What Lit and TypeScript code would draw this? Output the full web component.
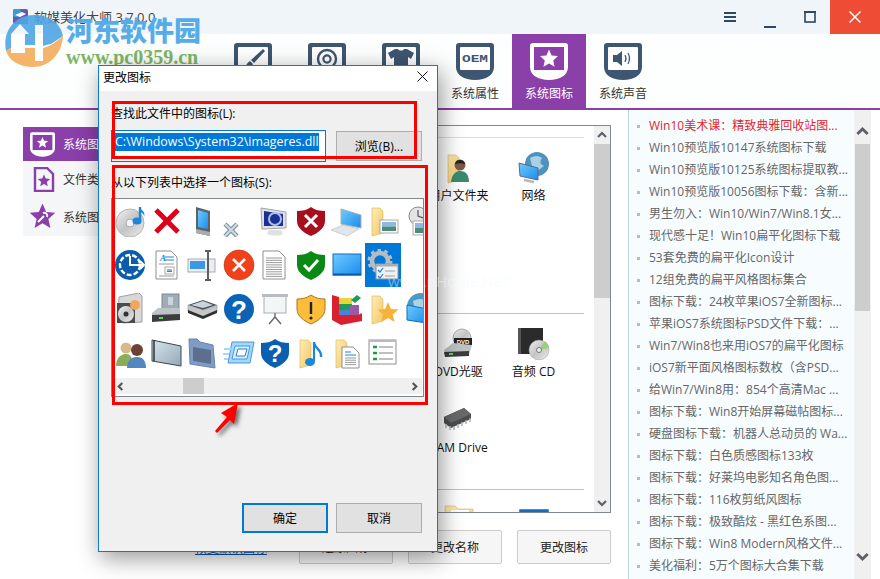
import { LitElement, html, css, svg } from "lit";
import { customElement } from "lit/decorators.js";

const PURPLE = "#8a3fa9";
const DARK = "#3e5671";

const star = (cx: number, cy: number, r: number, fill: string) => {
  const pts: string[] = [];
  for (let i = 0; i < 10; i++) {
    const a = -Math.PI / 2 + (i * Math.PI) / 5;
    const rr = i % 2 ? r * 0.46 : r;
    pts.push(`${(cx + rr * Math.cos(a)).toFixed(1)},${(cy + rr * Math.sin(a)).toFixed(1)}`);
  }
  return svg`<polygon points=${pts.join(" ")} fill=${fill}/>`;
};

const shape = "M3 0H35a3 3 0 0 1 3 3V24C38 32 30 37 19 37S0 32 0 24V3a3 3 0 0 1 3-3Z";
const tabSvg = (c: unknown) => html`<svg viewBox="0 0 38 37" width="38" height="37">${c}</svg>`;
const tabBase = svg`<path d=${shape} fill=${DARK}/><rect x="4" y="4" width="30" height="23" rx="1" fill="#fff"/>`;

const tabIcons: Record<string, unknown> = {
  brush: tabSvg(svg`${tabBase}<path d="M29 6 L31 8 L20 20 L17 17Z" fill=${DARK}/><path d="M16 18 L19 21 C17 26 12 27 8 26 C12 25 12 20 16 18Z" fill=${DARK}/>`),
  disc: tabSvg(svg`${tabBase}<circle cx="19" cy="16" r="9" fill="none" stroke=${DARK} stroke-width="2.4"/><circle cx="19" cy="16" r="3.6" fill="none" stroke=${DARK} stroke-width="2.2"/>`),
  shirt: tabSvg(svg`${tabBase}<path d="M13 6 L16 6 C17 8 21 8 22 6 L25 6 L32 10 L29 16 L26 14 V27 H12 V14 L9 16 L6 10Z" fill=${DARK}/>`),
  oem: tabSvg(svg`${tabBase}<text x="19" y="19.4" text-anchor="middle" font-family="Liberation Mono, monospace" font-weight="700" font-size="10.5" textLength="26" lengthAdjust="spacingAndGlyphs" fill=${DARK}>OEM</text>`),
  star: tabSvg(svg`<path d=${shape} fill="#fff"/><rect x="4" y="4" width="30" height="23" fill=${PURPLE}/>${star(19, 16, 9.5, "#fff")}`),
  sound: tabSvg(svg`${tabBase}<polygon points="9,12 13,12 18,8 18,23 13,19 9,19" fill=${DARK}/><path d="M21 12 Q23 15.5 21 19 M24 10 Q27 15.5 24 21" fill="none" stroke=${DARK} stroke-width="1.2"/>`),
};

const ic = (c: unknown) => html`<svg viewBox="0 0 32 32" width="32" height="32">${c}</svg>`;
const folderBack = svg`<path d="M5 3 L13 3 L16 6 V28 L5 31Z" fill="url(#gF)" stroke="#d9b25c" stroke-width=".6"/>`;
const doc = (x: number, y: number, w: number, h: number) =>
  svg`<path d="M${x} ${y}H${x + w - 6}L${x + w} ${y + 6}V${y + h}H${x}Z" fill="#fff" stroke="#8f8f8f"/>`;
const lines = (x: number, y: number, w: number, n: number, gap: number, c = "#9a9a9a") =>
  Array.from({ length: n }, (_, i) => svg`<line x1=${x} x2=${x + w} y1=${y + i * gap} y2=${y + i * gap} stroke=${c}/>`);
const photo = (x: number, y: number, w: number, h: number) =>
  svg`<rect x=${x} y=${y} width=${w} height=${h} fill="#fff" stroke="#aaa"/><rect x=${x + 2} y=${y + 2} width=${w - 4} height=${(h - 4) / 2} fill="#8fb9e0"/><rect x=${x + 2} y=${y + 2 + (h - 4) / 2} width=${w - 4} height=${(h - 4) / 2} fill="#4d8a78"/>`;
const shieldPath = "M16 2 C20 5 25 6 30 6 V16 C30 23 23 28 16 31 C9 28 2 23 2 16 V6 C7 6 12 5 16 2Z";
const qmark = (x: number, y: number, s: number) =>
  svg`<text x=${x} y=${y} text-anchor="middle" font-family="Liberation Sans, sans-serif" font-weight="700" font-size=${s} fill="#fff">?</text>`;
const xMark = (a: number, b: number, w: number, c = "#fff") =>
  svg`<path d="M${a} ${a}L${b} ${b}M${b} ${a}L${a} ${b}" stroke=${c} stroke-width=${w}/>`;

const I: Record<string, unknown> = {
  disc: ic(svg`<circle cx="15" cy="18" r="14" fill="url(#gS)" stroke="#b5b5b5"/><circle cx="15" cy="18" r="4" fill="#f4f4f4" stroke="#aaa"/><path d="M25 2 V15" stroke="#1c86dc" stroke-width="2.4"/><ellipse cx="22" cy="16" rx="4.5" ry="3.5" fill="#1c86dc"/><path d="M25 2 C26 6 31 6 29 12 C29 8 27 8 25 7Z" fill="#1c86dc"/>`),
  redx: ic(xMark(5, 27, 5, "#dc0018")),
  tablet: ic(svg`<polygon points="9,2 23,6 23,31 9,28" fill="#5d6266"/><polygon points="11,5 21,8 21,24 11,22" fill="url(#gB)"/><polygon points="9,24 23,27 23,31 9,28" fill="#a9adb0"/>`),
  smallx: html`<svg viewBox="0 0 32 32" width="32" height="32"><path d="M2 19L14 31M14 19L2 31" stroke="#7f95a8" stroke-width="4.5"/><path d="M2 19L14 31M14 19L2 31" stroke="#cfdae3" stroke-width="2"/></svg>`,
  crt: ic(svg`<polygon points="2,3 27,7 27,23 3,24" fill="#dfe1e5" stroke="#a0a3a9"/><polygon points="5,6 24,9 24,21 5,21" fill="#1c2f95"/><circle cx="16" cy="14" r="6" fill="none" stroke="#a9c0ee" stroke-width="2"/><path d="M10 25 H22 L24 29 C20 31 12 31 8 29Z" fill="#dfe1e4"/>`),
  shieldRed: ic(svg`<path d=${shieldPath} fill="#a80f1e"/>${xMark(10, 22, 3)}`),
  laptop: ic(svg`<polygon points="10,4 30,10 30,23 10,19" fill="url(#gB)" stroke="#a9b0b8"/><polygon points="0,25 12,20 28,24 16,31" fill="#e2e5e8" stroke="#b4b8bc" stroke-width=".6"/>`),
  folderImg: ic(svg`${folderBack}${photo(13, 15, 18, 13)}`),
  clock: ic(svg`<circle cx="15" cy="11" r="9" fill="#e4e4e4" stroke="#888"/><path d="M15 5V11L20 13" fill="none" stroke="#555" stroke-width="1.2"/>${photo(10, 16, 20, 14)}`),
  clockBlue: ic(svg`<circle cx="15" cy="16" r="15" fill="#0a5dab"/><circle cx="15" cy="16" r="10" fill="none" stroke="#fff" stroke-width="2.4" stroke-dasharray="5 2"/><path d="M15 7V16H29M25 12L29 16L25 20" fill="none" stroke="#fff" stroke-width="2"/>`),
  docA: ic(svg`${doc(5, 2, 21, 28)}<text x="9" y="12" font-family="Liberation Serif, serif" font-style="italic" font-weight="700" font-size="9" fill="#1e83d8">A</text><path d="M14 8H23M14 11H23" stroke="#1e83d8"/>${lines(8, 15, 15, 1, 2)}${photo(14, 18, 9, 7)}${lines(8, 27, 15, 1, 2)}`),
  rename: ic(svg`<rect x="1" y="10" width="27" height="13" fill="#e8eef3" stroke="#a5adb5"/><rect x="3" y="12" width="15" height="8" fill="#3e97e6"/><path d="M18 2H24M21 2V31M18 31H24" stroke="#5f5f5f" stroke-width="2" fill="none"/>`),
  redCircle: ic(svg`<circle cx="16" cy="16" r="15" fill="#f2401a" stroke="#b8310f" stroke-width=".6"/>${xMark(10, 22, 2.6)}`),
  docL: ic(svg`${doc(4, 2, 22, 28)}${lines(7, 9, 16, 9, 2.3)}`),
  shieldGreen: ic(svg`<path d=${shieldPath} fill="#0a8a14"/><path d="M9 16L14 21L23 11" fill="none" stroke="#fff" stroke-width="3"/>`),
  screen: ic(svg`<rect x="2" y="5" width="28" height="21" fill="url(#gB)" stroke="#0e6cc4"/><line x1="2" x2="30" y1="25.5" y2="25.5" stroke="#0a5cab" stroke-width="2"/>`),
  gear: ic(svg`<circle cx="13" cy="12" r="8" fill="none" stroke="#b7bcc2" stroke-width="4.5"/><circle cx="13" cy="12" r="11" fill="none" stroke="#b7bcc2" stroke-width="3" stroke-dasharray="3.5 3.5"/><rect x="9" y="15" width="22" height="15" fill="#eef1f3" stroke="#8d9297"/><rect x="9" y="15" width="22" height="2.5" fill="#a7adb3"/><path d="M11 21l2 2 3-4M11 27l2 2 3-4" fill="none" stroke="#1c80d8" stroke-width="1.2"/><path d="M18 22H28M18 27H28" stroke="#9aa0a6"/>`),
  cdCase: ic(svg`<polygon points="4,4 24,0 27,3 27,29 8,30 3,27" fill="#d8d8d8" stroke="#a0a0a0"/><rect x="2" y="10" width="18" height="20" fill="#4b4b4b"/><circle cx="11" cy="21" r="8" fill="url(#gS)"/><circle cx="11" cy="21" r="2.5" fill="#333"/><circle cx="20" cy="12" r="5" fill="#f0a75c"/>`),
  drive: ic(svg`<rect x="11" y="1" width="17" height="19" fill="#9eacb6" stroke="#808a92"/><rect x="17" y="4" width="5" height="8" fill="#ccd5db"/><polygon points="1,20 7,15 29,15 29,24 1,27" fill="#bfc3c6"/><polygon points="1,22 29,21 29,27 1,29" fill="#3a3c3e"/><rect x="8" y="24" width="4" height="2" fill="#5fd35f"/>`),
  scanner: ic(svg`<polygon points="1,12 16,7 30,12 16,17" fill="#4d5357"/><polygon points="4,12 16,8 26,12 16,15" fill="#c6d4dc"/><polygon points="1,12 16,17 30,12 30,19 16,25 1,19" fill="#c4c6c8" stroke="#7f8285" stroke-width=".5"/><polygon points="1,17 16,23 30,17 30,20 16,26 1,20" fill="#2d2f31"/>`),
  help: ic(svg`<circle cx="16" cy="16" r="15" fill="#0a63b5"/>${qmark(16, 26, 26)}`),
  projector: ic(svg`<rect x="5" y="3" width="22" height="17" fill="#f3f6f7" stroke="#a9adb0"/><rect x="3" y="1" width="26" height="3" fill="#b8bcc0"/><path d="M16 20V25M16 24L10 31M16 24L22 31" stroke="#666" stroke-width="1.4"/>`),
  shieldYellow: ic(svg`<path d=${shieldPath} fill="#fdbc3a" stroke="#a9781c"/><path d="M16 9V21" stroke="#222" stroke-width="2.4"/><circle cx="16" cy="25" r="1.6" fill="#222"/>`),
  blocks: ic(svg`<polygon points="1,2 8,4 8,22 27,22 31,20 31,28 10,32 1,27" fill="#d92030"/><rect x="8" y="5" width="13" height="7" fill="#e9d53a"/><rect x="8" y="11" width="13" height="6" fill="#1c9c5b"/><rect x="8" y="17" width="11" height="5" fill="#4a82d8"/><rect x="19" y="12" width="9" height="10" fill="#9a5aa6"/><polygon points="20,7 26,2 30,5 24,10" fill="#1e9c52"/>`),
  folderStar: ic(svg`${folderBack}${star(21, 20, 11, "#f8b238")}`),
  globe: ic(svg`<circle cx="18" cy="14" r="14" fill="#4c9ac4"/><path d="M10 8 Q18 4 22 8 Q18 14 24 16 Q18 24 12 18Z" fill="#a9d4e6"/><polygon points="4,12 24,16 24,30 4,27" fill="url(#gB)" stroke="#0e6cc4"/>`),
  users: ic(svg`<circle cx="11" cy="11" r="5.5" fill="#d9b98c"/><path d="M1 29 C1 19 8 17 11 17 C15 17 18 20 18 29Z" fill="#8bad58"/><circle cx="22" cy="13" r="6" fill="#6a4430"/><path d="M12 31 C12 22 18 20 22 20 C27 20 31 23 31 31Z" fill="#5487c2"/>`),
  panel: ic(svg`<polygon points="1,3 30,9 30,29 1,24" fill="url(#gP)" stroke="#3d464e"/><line x1="3" x2="3" y1="3" y2="24" stroke="#333" stroke-width="1.5"/>`),
  blueFolder: ic(svg`<path d="M2 2 L10 2 L13 5 L26 8 L28 31 L3 27Z" fill="#7f9cc6" stroke="#6985ae"/><polygon points="6,10 24,13 24,27 6,24" fill="#5c6f8e"/>`),
  frames: ic(svg`<polygon points="9,5 31,5 27,26 5,26" fill="#a9d6f4" stroke="#3f9ae3"/><polygon points="12,9 27,9 24,22 9,22" fill="#d8eefc" stroke="#3f9ae3"/><polygon points="15,12 24,12 22,19 13,19" fill="#fff" stroke="#2b7fc8"/><path d="M1 12H8M0 17H6M1 22H5" stroke="#a9d6f4" stroke-width="2"/>`),
  helpShield: ic(svg`<path d=${shieldPath} fill="#0a5fb0"/>${qmark(16, 25, 24)}`),
  musicFolder: ic(svg`${folderBack}<path d="M19 6 C20 12 27 12 26 20" fill="none" stroke="#1c86dc" stroke-width="2.4"/><path d="M19 5 V24" stroke="#1c86dc" stroke-width="2.2"/><ellipse cx="15" cy="25" rx="5" ry="4" fill="#1c86dc"/>`),
  docFolder: ic(svg`${folderBack}${doc(11, 10, 17, 21)}<path d="M14 15H20M14 18H25" stroke="#1e83d8"/>${lines(14, 21, 11, 4, 2.2)}`),
  list: ic(svg`<rect x="2" y="3" width="27" height="24" fill="#fff" stroke="#8e8e8e"/><path d="M2 4H29" stroke="#bbb" stroke-width="2"/><path d="M6 10h4M6 16h4M6 22h4" stroke="#1e9c3c" stroke-width="2.5"/><path d="M12 10H26M12 16H26M12 22H26" stroke="#808080"/>`),
  userFolder: ic(svg`${folderBack}<circle cx="17" cy="13" r="5.5" fill="#7b5a44"/><path d="M17 8a5.5 5.5 0 0 1 5 4 C19 11 15 11 12 12a5.5 5.5 0 0 1 5-4Z" fill="#222"/><path d="M8 30 C9 21 14 19 17 19 C22 19 26 22 26 30Z" fill="#3b8a72"/>`),
  net: ic(svg`<circle cx="19" cy="12" r="12" fill="#4c93bd"/><path d="M12 6 Q19 2 24 6 Q20 11 26 14 L18 20 L14 14Z" fill="#a9d0e3"/><polygon points="1,11 20,16 20,28 2,24" fill="url(#gB)" stroke="#667"/><path d="M6 28 L16 30" stroke="#b5b9bd" stroke-width="2.5"/>`),
  dvd: ic(svg`<circle cx="19" cy="10" r="9" fill="url(#gS)" stroke="#aaa"/><rect x="11" y="10" width="18" height="7" fill="#222"/><text x="20" y="16" text-anchor="middle" font-family="Liberation Sans, sans-serif" font-weight="700" font-size="6" fill="#fff">DVD</text><polygon points="1,22 10,15 29,17 26,27 2,28" fill="#bfc3c6"/><polygon points="1,24 26,23 26,28 2,29" fill="#3a3c3e"/><rect x="6" y="25" width="4" height="2" fill="#5fd35f"/>`),
  audio: ic(svg`<rect x="0" y="0" width="25" height="26" fill="#2b2b2b"/><rect x="0" y="0" width="3" height="26" fill="#555"/><circle cx="21" cy="22" r="10" fill="url(#gS)" stroke="#999" stroke-width=".5"/><path d="M21 22L27 13A10 10 0 0 1 31 20Z" fill="#9ad07c"/><circle cx="21" cy="22" r="2.5" fill="#eee" stroke="#777"/>`),
  ram: ic(svg`<polygon points="1,13 21,4 28,10 28,15 8,24 1,19" fill="#4b4d4f"/><polygon points="1,13 21,4 28,10 8,19" fill="#67696b"/><path d="M3 20v4M7 22v4M11 22v4M15 20v4M19 18v4M23 16v4M27 14v4" stroke="#b0b3b6" stroke-width="1.5"/>`),
  folder: ic(svg`<path d="M2 2H12L15 5H30V30H2Z" fill="url(#gF)" stroke="#d9b25c" stroke-width=".6"/><rect x="8" y="6" width="18" height="4" fill="#fff"/>`),
  blueRect: ic(svg`<rect x="2" y="6" width="28" height="24" fill="#fff" stroke="#0e6cc4" stroke-width="1.5"/><rect x="2" y="6" width="28" height="4" fill="#0e6cc4"/>`),
};

const chevron = (dir: "up" | "down" | "left" | "right", size = 10, c = "#5b6168", w = 2.2) => {
  const d = { up: "M1 7L5 3L9 7", down: "M1 3L5 7L9 3", left: "M7 1L3 5L7 9", right: "M3 1L7 5L3 9" }[dir];
  return html`<svg viewBox="0 0 10 10" width=${size} height=${size}><path d=${d} fill="none" stroke=${c} stroke-width=${w}/></svg>`;
};

const news = [
  "Win10美术课：精致典雅回收站图...", "Win10预览版10147系统图标下载", "Win10预览版10125系统图标提取教...",
  "Win10预览版10056图标下载：含新...", "男生勿入：Win10/Win7/Win8.1女...", "现代感十足！Win10扁平化图标下载",
  "53套免费的扁平化Icon设计", "12组免费的扁平风格图标集合", "图标下载：24枚苹果iOS7全新图标...",
  "苹果iOS7系统图标PSD文件下载：...", "Win7/Win8也来用iOS7的扁平化图标", "iOS7新平面风格图标数枚（含PSD...",
  "给Win7/Win8用：854个高清Mac ...", "图标下载：Win8开始屏幕磁帖图标...", "硬盘图标下载：机器人总动员的 Wa...",
  "图标下载：白色质感图标133枚", "图标下载：好莱坞电影知名角色图...", "图标下载：116枚剪纸风图标",
  "图标下载：极致酷炫 - 黑红色系图...", "图标下载：Win8 Modern风格文件...", "美化福利：5万个图标大合集下载",
];

const tabs = [
  ["brush", "系统主题"], ["disc", "开机画面"], ["shirt", "桌面美化"],
  ["oem", "系统属性"], ["star", "系统图标"], ["sound", "系统声音"],
];

const grid = [
  "disc", "redx", "tablet", "smallx", "crt", "shieldRed", "laptop", "folderImg", "clock",
  "clockBlue", "docA", "rename", "redCircle", "docL", "shieldGreen", "screen", "gear", "",
  "cdCase", "drive", "scanner", "help", "projector", "shieldYellow", "blocks", "folderStar", "globe",
  "users", "panel", "blueFolder", "frames", "helpShield", "musicFolder", "docFolder", "list", "",
];

@customElement("app-root")
export class AppRoot extends LitElement {
  static styles = css`
    :host { display: block; position: relative; width: 880px; height: 579px; overflow: hidden; background: #fff;
      font-family: "Open Sans", "Noto Sans CJK SC", sans-serif; font-size: 12px; color: #222; }
    svg { display: block; }
    .defs { position: absolute; width: 0; height: 0; }
    .title { height: 34px; background: #f0f5f9; display: flex; align-items: center; padding-left: 13px; }
    .app-ico { width: 15px; height: 15px; margin-top: -2px; margin-right: 6px; }
    .title-text { font-size: 13px; color: #444; margin-top: -2px; }
    .ctrls { margin-left: auto; display: flex; height: 34px; }
    .ctrl { width: 40px; display: flex; align-items: center; justify-content: center; }
    .ctrl.low { padding-top: 9px; box-sizing: border-box; }
    .ctrl.close { width: 50px; background: #ee4c35; }
    .nav { height: 74px; border-bottom: 2px solid #8a3fa9; display: flex; padding-left: 216px; background: #fdfefe; }
    .tab { width: 74px; display: flex; flex-direction: column; align-items: center; padding-top: 9px; box-sizing: border-box; color: #333; }
    .tab.on { background: #8a3fa9; color: #fff; }
    .tab span { margin-top: 6px; line-height: 16px; font-size: 12px; }
    .main { display: flex; height: 469px; }
    .side { width: 112px; margin: 17px 0 0 23px; height: 109px; background: #f5f6f7; }
    .side-item { height: 36px; display: flex; align-items: center; white-space: nowrap; overflow: hidden; color: #333; }
    .side-item.on { height: 34px; background: #8a3fa9; color: #fff; }
    .side-item.last { height: 39px; }
    .side-item svg { margin: 0 8px 0 7px; flex: none; }
    .center { width: 476px; display: flex; flex-direction: column; margin-top: 15px; }
    .box { height: 388px; border: 1px solid #82878f; box-sizing: border-box; display: flex; background: #fff; }
    .sections { flex: 1; overflow: hidden; padding-right: 10px; }
    .sec { height: 176px; border-top: 1px solid #d8dfe6; box-sizing: border-box; overflow: hidden;
      display: grid; grid-template-columns: 75px 75px; grid-auto-rows: 76px; padding: 14px 0 0 285px; }
    .sec.first { margin-top: 11px; }
    .sec.blue { border-top-color: #b8c2d8; }
    .cell { display: flex; flex-direction: column; align-items: center; white-space: nowrap; color: #111; }
    .cell span { margin-top: 3px; line-height: 18px; }
    .vbar { width: 16px; background: #f0f0f0; display: flex; flex-direction: column; align-items: center; }
    .vbar .arrow { height: 18px; display: flex; align-items: center; justify-content: center; }
    .vbar .thumb { width: 100%; height: 154px; background: #cdcdcd; }
    .vbar .arrow.end { margin-top: auto; }
    .btns { display: flex; align-items: center; gap: 15px; margin-top: 17px; height: 34px; }
    .link { margin-left: 60px; margin-right: auto; color: #0a5cb0; text-decoration: underline; line-height: 16px; margin-top: 3px; }
    .btn { width: 94px; height: 34px; box-sizing: border-box; border: 1px solid #ccc; border-radius: 2px; background: #f6f6f6;
      display: flex; align-items: center; justify-content: center; color: #222; font-size: 12px; }
    .news { width: 243px; margin-left: 17px; display: flex; }
    .news-list { width: 226px; box-sizing: border-box; background: #f7fdff; border-left: 1px solid #c4d4df; padding: 5px 0 0 8px; margin: 0; list-style: none; }
    .news-list li { height: 22px; line-height: 22px; display: flex; align-items: center; color: #666; white-space: nowrap; font-size: 12px; }
    .news-list li.hot { color: #e2262c; }
    .news-list li::before { content: ""; width: 3px; height: 3px; background: #bbb; margin-right: 9px; flex: none; }
    .nbar { width: 17px; background: #f0f0f0; display: flex; flex-direction: column; align-items: center; }
    .nbar .arrow { height: 34px; display: flex; align-items: center; justify-content: center; padding-top: 8px; box-sizing: border-box; }
    .nbar .thumb { width: 15px; height: 167px; background: #cdcdcd; }
    .nbar .arrow.end { margin-top: auto; height: 36px; padding: 0 0 10px; }

    .dialog { position: absolute; left: 98px; top: 65px; width: 340px; height: 487px; box-sizing: border-box; border: 1px solid #0f7ad0;
      background: #f0f0f0; box-shadow: 3px 6px 22px rgba(0,0,0,.42); display: flex; flex-direction: column; color: #000; }
    .d-title { height: 25px; background: #fff; display: flex; align-items: center; padding: 0 9px 4px 4px; box-sizing: border-box; justify-content: space-between; flex: none; }
    .d-body { padding: 15px 15px 18px 12px; flex: 1; display: flex; flex-direction: column; position: relative; }
    .lbl { line-height: 16px; }
    .row { display: flex; margin-top: 8px; align-items: flex-start; }
    .input { width: 215px; height: 32px; box-sizing: border-box; border: 1px solid #0078d7; background: #fff; padding: 2px 0 0 3px; flex: none; overflow: hidden; }
    .sel { display: inline-block; background: #0078d7; color: #fff; font-size: 12.4px; line-height: 18px; white-space: nowrap; }
    .dbtn { width: 86px; height: 30px; box-sizing: border-box; border: 1px solid #adadad; background: #e1e1e1; display: flex; align-items: center; justify-content: center; }
    .browse { margin: 1px 0 0 10px; }
    .lbl2 { margin-top: 13px; }
    .picker { width: 313px; height: 199px; box-sizing: border-box; border: 1px solid #82878f; background: #fff; margin-top: 7px; display: flex; flex-direction: column; flex: none; }
    .picks { height: 179px; overflow: hidden; display: grid; grid-template-columns: repeat(9, 36px); grid-auto-rows: 44px; padding-left: 1px; align-content: start; }
    .pick { display: flex; align-items: center; justify-content: center; }
    .pick.sel-i { background: #0078d7; }
    .hbar { height: 16px; margin: 0 1px 2px; background: #f0f0f0; display: flex; align-items: center; justify-content: space-between; position: relative; padding: 0 3px; }
    .hbar i { position: absolute; left: 70px; top: 0; width: 21px; height: 16px; background: #cdcdcd; }
    .foot { margin-top: auto; display: flex; justify-content: flex-end; gap: 8px; }
    .dbtn.primary { border: 2px solid #0078d7; }
    .mark { position: absolute; border: 3px solid #f00; box-sizing: border-box; pointer-events: none; left: 13px; }
    .m1 { top: 10px; width: 305px; height: 58px; }
    .m2 { top: 74px; width: 316px; height: 240px; }
    .arrow-red { position: absolute; left: 207px; top: 398px; filter: drop-shadow(3px 3px 2px rgba(0,0,0,.55)); }
    .ghost { position: absolute; left: 388px; top: 271px; font-size: 15px; color: rgba(243,250,255,.45); white-space: nowrap; }

    .wm { position: absolute; left: 5px; top: 15px; display: flex; pointer-events: none; }
    .wm-logo { opacity: .9; flex: none; }
    .wm-text { margin-left: 3px; }
    .wm-cn { font-family: "Noto Sans CJK SC", sans-serif; font-weight: 900; font-size: 27px; line-height: 30px; color: #55ace8; }
    .wm-url { font-family: "Liberation Serif", serif; font-weight: 700; font-size: 20px; line-height: 22px; color: #7fb765; margin-top: 1px; }
  `;

  render() {
    return html`
      <svg class="defs" aria-hidden="true">
        <defs>
          <linearGradient id="gF" x1="0" y1="0" x2="1" y2="1"><stop offset="0" stop-color="#fdeeb5"/><stop offset="1" stop-color="#f3c866"/></linearGradient>
          <linearGradient id="gB" x1="0" y1="0" x2="1" y2="1"><stop offset="0" stop-color="#6fcbff"/><stop offset="1" stop-color="#1b8cec"/></linearGradient>
          <linearGradient id="gS" x1="0" y1="0" x2="1" y2="1"><stop offset="0" stop-color="#f2f2f2"/><stop offset=".5" stop-color="#c4c4c4"/><stop offset="1" stop-color="#ececec"/></linearGradient>
          <linearGradient id="gP" x1="0" y1="0" x2="1" y2="1"><stop offset="0" stop-color="#d5e5ef"/><stop offset="1" stop-color="#94a9b6"/></linearGradient>
        </defs>
      </svg>

      <div class="title">
        <svg class="app-ico" viewBox="0 0 15 15"><rect width="15" height="15" rx="2" fill="#6a58b0"/><rect width="8" height="8" rx="2" fill="#3f9ad6"/><rect x="8" y="8" width="7" height="7" fill="#3d7f94"/><path d="M2 6L9 3L13 5L7 8Z" fill="#fff"/></svg>
        <span class="title-text">软媒美化大师 3.7.0.0</span>
        <div class="ctrls">
          <div class="ctrl"><svg width="12" height="10"><path d="M0 1H12M0 5H12M0 9H12" stroke="#2f4760" stroke-width="2"/></svg></div>
          <div class="ctrl low"><svg width="12" height="12"><path d="M0 11H12" stroke="#2f4760" stroke-width="2"/></svg></div>
          <div class="ctrl"><svg width="12" height="12"><rect x="1" y="1" width="10" height="10" fill="none" stroke="#2f4760" stroke-width="1.6"/><path d="M0 1H12" stroke="#2f4760" stroke-width="2"/></svg></div>
          <div class="ctrl close"><svg width="12" height="12"><path d="M0.5 0.5L11.5 11.5M11.5 0.5L0.5 11.5" stroke="#fff" stroke-width="1.5"/></svg></div>
        </div>
      </div>

      <div class="nav">
        ${tabs.map(([k, t]) => html`<div class="tab ${k === "star" ? "on" : ""}">${tabIcons[k]}<span>${t}</span></div>`)}
      </div>

      <div class="main">
        <div class="side">
          <div class="side-item on"><svg viewBox="0 0 38 37" width="25" height="25"><path d=${shape} fill="#fff"/><rect x="4" y="4" width="30" height="23" fill=${PURPLE}/>${star(19, 16, 9, "#fff")}</svg>系统图标</div>
          <div class="side-item"><svg viewBox="0 0 25 25" width="25" height="25"><path d="M5 1H17L23 7V24H5Z" fill="none" stroke=${PURPLE} stroke-width="2.4"/>${star(14, 14, 6.5, PURPLE)}</svg>文件类型图标</div>
          <div class="side-item last"><svg viewBox="0 0 25 25" width="25" height="25">${star(12.5, 13, 13.5, PURPLE)}<path d="M8 18L14 12M13 9a3 3 0 0 1 4 4" stroke="#fff" stroke-width="2" fill="none"/></svg>系统图标修复</div>
        </div>
        <div class="center">
          <div class="box">
            <div class="sections">
              <div class="sec first">
                <div class="cell">${I.userFolder}<span>用户文件夹</span></div>
                <div class="cell">${I.net}<span>网络</span></div>
              </div>
              <div class="sec blue">
                <div class="cell">${I.dvd}<span>DVD光驱</span></div>
                <div class="cell">${I.audio}<span>音频 CD</span></div>
                <div class="cell">${I.ram}<span>RAM Drive</span></div>
              </div>
              <div class="sec blue">
                <div class="cell">${I.folder}</div>
                <div class="cell">${I.blueRect}</div>
              </div>
            </div>
            <div class="vbar">
              <div class="arrow">${chevron("up")}</div>
              <div class="thumb"></div>
              <div class="arrow end">${chevron("down")}</div>
            </div>
          </div>
          <div class="btns">
            <span class="link">恢复默认图标</span>
            <div class="btn">还原图标</div>
            <div class="btn">更改名称</div>
            <div class="btn">更改图标</div>
          </div>
        </div>
        <div class="news">
          <ul class="news-list">
            ${news.map((n, i) => html`<li class=${i === 0 ? "hot" : ""}>${n}</li>`)}
          </ul>
          <div class="nbar">
            <div class="arrow">${chevron("up", 13)}</div>
            <div class="thumb"></div>
            <div class="arrow end">${chevron("down", 13)}</div>
          </div>
        </div>
      </div>

      <div class="wm">
        <svg class="wm-logo" viewBox="0 0 58 52" width="58" height="52">
          <path d="M29 0C45 0 56 9 58 21L46 29C44 29 41 30 38 31V10H30V30H20V19H24L15 9L6 19V33L1 36C-3 15 11 0 29 0Z" fill="#4fa6e4"/>
          <path d="M1 36L6 33V38H20V33H30V46H38V33C44 32 51 27 58 21C57 39 44 52 28 52C15 52 4 46 1 36Z" fill="#f6ad5c"/>
        </svg>
        <div class="wm-text">
          <div class="wm-cn">河东软件园</div>
          <div class="wm-url">www.pc0359.cn</div>
        </div>
      </div>

      <div class="dialog">
        <div class="d-title"><span>更改图标</span><svg width="11" height="11"><path d="M0.5 0.5L10.5 10.5M10.5 0.5L0.5 10.5" stroke="#111" stroke-width="1"/></svg></div>
        <div class="d-body">
          <div class="lbl">查找此文件中的图标(L):</div>
          <div class="row">
            <div class="input"><span class="sel">C:\\Windows\\System32\\imageres.dll</span></div>
            <div class="dbtn browse">浏览(B)...</div>
          </div>
          <div class="lbl lbl2">从以下列表中选择一个图标(S):</div>
          <div class="picker">
            <div class="picks">
              ${grid.map((k) => html`<div class="pick ${k === "gear" ? "sel-i" : ""}">${k ? I[k] : ""}</div>`)}
            </div>
            <div class="hbar">${chevron("left", 9, "#555", 2.4)}<i></i>${chevron("right", 9, "#555", 2.4)}</div>
          </div>
          <div class="foot">
            <div class="dbtn primary">确定</div>
            <div class="dbtn">取消</div>
          </div>
          <div class="mark m1"></div>
          <div class="mark m2"></div>
        </div>
      </div>

      <svg class="arrow-red" viewBox="0 0 40 40" width="40" height="40">
        <polygon points="31,5 27,26 23,22 10,35 8,33 20,19 14,15" fill="#f00"/>
      </svg>
      <div class="ghost">www.pHome.NET</div>
    `;
  }
}
